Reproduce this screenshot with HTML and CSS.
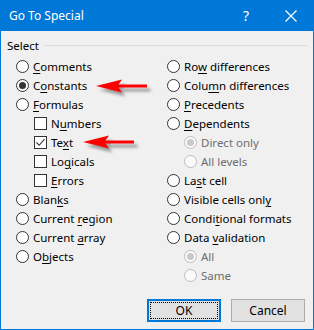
FILE: index.html
```html
<!DOCTYPE html>
<html>
<head>
<meta charset="utf-8">
<link rel="stylesheet" href="styles.css">
</head>
<body>
<div class="dialog">
  <div class="titlebar">
    <span class="title">Go To Special</span>
    <span class="help">?</span>
    <span class="close">
      <svg width="12" height="12" viewBox="0 0 12 12"><path d="M0.5 0.5 L11.5 11.5 M11.5 0.5 L0.5 11.5" stroke="#fff" stroke-width="1.2" fill="none"/></svg>
    </span>
  </div>
  <div class="body">
    <div class="group-head"><span>Select</span><span class="rule"></span></div>
    <div class="cols">
      <div class="col">
        <div class="row"><span class="radio"></span><span><u>C</u>omments</span></div>
        <div class="row"><span class="radio on"></span><span>C<u>o</u>nstants</span></div>
        <div class="row"><span class="radio"></span><span><u>F</u>ormulas</span></div>
        <div class="row sub"><span class="check"></span><span>N<u>u</u>mbers</span></div>
        <div class="row sub"><span class="check checked"><svg width="11" height="11" viewBox="0 0 11 11"><path d="M1.5 5.5 L4.2 8.3 L9.5 2.2" stroke="#333" stroke-width="1.1" fill="none"/></svg></span><span>Te<u>x</u>t</span></div>
        <div class="row sub"><span class="check"></span><span>Lo<u>g</u>icals</span></div>
        <div class="row sub"><span class="check"></span><span><u>E</u>rrors</span></div>
        <div class="row"><span class="radio"></span><span>Blan<u>k</u>s</span></div>
        <div class="row"><span class="radio"></span><span>Current <u>r</u>egion</span></div>
        <div class="row"><span class="radio"></span><span>Current <u>a</u>rray</span></div>
        <div class="row"><span class="radio"></span><span>O<u>b</u>jects</span></div>
      </div>
      <div class="col right">
        <div class="row"><span class="radio"></span><span>Ro<u>w</u> differences</span></div>
        <div class="row"><span class="radio"></span><span>Colu<u>m</u>n differences</span></div>
        <div class="row"><span class="radio"></span><span><u>P</u>recedents</span></div>
        <div class="row"><span class="radio"></span><span><u>D</u>ependents</span></div>
        <div class="row sub2 dis"><span class="radio on"></span><span>Direct only</span></div>
        <div class="row sub2 dis"><span class="radio"></span><span>All levels</span></div>
        <div class="row"><span class="radio"></span><span>La<u>s</u>t cell</span></div>
        <div class="row"><span class="radio"></span><span>Visible cells onl<u>y</u></span></div>
        <div class="row"><span class="radio"></span><span>Condi<u>t</u>ional formats</span></div>
        <div class="row"><span class="radio"></span><span>Data <u>v</u>alidation</span></div>
        <div class="row sub2 dis"><span class="radio on"></span><span>All</span></div>
        <div class="row sub2 dis"><span class="radio"></span><span>Same</span></div>
      </div>
    </div>
    <div class="buttons">
      <button class="btn default"><span class="focus">OK</span></button>
      <button class="btn">Cancel</button>
    </div>
  </div>
  <svg class="arrow a1" width="60" height="22" viewBox="0 0 60 22">
    <defs><filter id="sh" x="-20%" y="-50%" width="140%" height="200%"><feGaussianBlur stdDeviation="1.6"/></filter></defs>
    <path d="M2 8 L28 1.5 L24.5 6.5 L53 6.5 L53 9.5 L24.5 9.5 L28 14.5 Z" fill="#555" opacity="0.55" filter="url(#sh)" transform="translate(1.5,3)"/>
    <path d="M0 7 L26 0.5 L22.5 5.5 L51 5.5 L51 8.5 L22.5 8.5 L26 13.5 Z" fill="#f00"/>
  </svg>
  <svg class="arrow a2" width="60" height="22" viewBox="0 0 60 22">
    <path d="M2 8 L28 1.5 L24.5 6.5 L53 6.5 L53 9.5 L24.5 9.5 L28 14.5 Z" fill="#555" opacity="0.55" filter="url(#sh)" transform="translate(1.5,3)"/>
    <path d="M0 7 L26 0.5 L22.5 5.5 L51 5.5 L51 8.5 L22.5 8.5 L26 13.5 Z" fill="#f00"/>
  </svg>
</div>
</body>
</html>
```

FILE: styles.css
```css
html, body {
  margin: 0;
  padding: 0;
  background: #f0f0f0;
}
.dialog {
  position: relative;
  width: 314px;
  height: 330px;
  font-family: "Noto Sans", "Open Sans", sans-serif;
  font-size: 11.5px;
  color: #000;
}
.titlebar {
  height: 31px;
  background: #0078d7;
  color: #fff;
  display: flex;
  align-items: center;
  padding-left: 9px;
}
.title {
  font-size: 12px;
  flex: 1;
}
.help {
  font-size: 14px;
  width: 46px;
  text-align: center;
  margin-right: -1px;
}
.close {
  width: 46px;
  display: flex;
  justify-content: center;
  align-items: center;
}
.body {
  height: 299px;
  box-sizing: border-box;
  border: 1px solid #0078d7;
  border-top: 0;
  background: #f0f0f0;
  padding: 6px 6px 0 6px;
}
.group-head {
  display: flex;
  align-items: center;
  height: 16px;
}
.group-head .rule {
  flex: 1;
  height: 1px;
  background: #dcdcdc;
  margin-left: 5px;
}
.cols {
  display: flex;
  margin-top: 4px;
  padding-left: 9px;
}
.col {
  width: 151px;
  flex: none;
}
.col.right {
  width: 130px;
}
.row {
  height: 19px;
  display: flex;
  align-items: center;
  white-space: nowrap;
}
.row.sub { padding-left: 18px; }
.row.sub2 { padding-left: 17px; }
.radio {
  width: 13px;
  height: 13px;
  box-sizing: border-box;
  border: 1px solid #333;
  border-radius: 50%;
  background: #fff;
  margin-right: 4px;
  display: flex;
  align-items: center;
  justify-content: center;
  flex: none;
}
.radio.on::after {
  content: "";
  width: 7px;
  height: 7px;
  border-radius: 50%;
  background: #333;
}
.dis { color: #6d6d6d; }
.dis .radio {
  border-color: #bcbcbc;
  background: #fafafa;
}
.dis .radio.on::after { background: #c8c8c8; }
.check {
  width: 13px;
  height: 13px;
  box-sizing: border-box;
  border: 1px solid #333;
  background: #fff;
  margin-right: 4px;
  display: flex;
  align-items: center;
  justify-content: center;
  flex: none;
}
u { text-decoration-thickness: 1px; text-underline-offset: 2px; }
.buttons {
  display: flex;
  justify-content: flex-end;
  gap: 10px;
  margin-top: 14px;
  padding-right: 2px;
}
.btn {
  width: 74px;
  height: 23px;
  box-sizing: border-box;
  border: 1px solid #adadad;
  background: #e1e1e1;
  font-family: inherit;
  font-size: 12px;
  color: #000;
  padding: 0;
  display: flex;
  align-items: center;
  justify-content: center;
}
.btn.default {
  border: 2px solid #0078d7;
  padding: 1px;
}
.btn .focus {
  flex: 1;
  align-self: stretch;
  border: 1px dotted #000;
  display: flex;
  align-items: center;
  justify-content: center;
}
.arrow {
  position: absolute;
}
.a1 { left: 96px; top: 79px; }
.a2 { left: 83px; top: 135px; }
```
